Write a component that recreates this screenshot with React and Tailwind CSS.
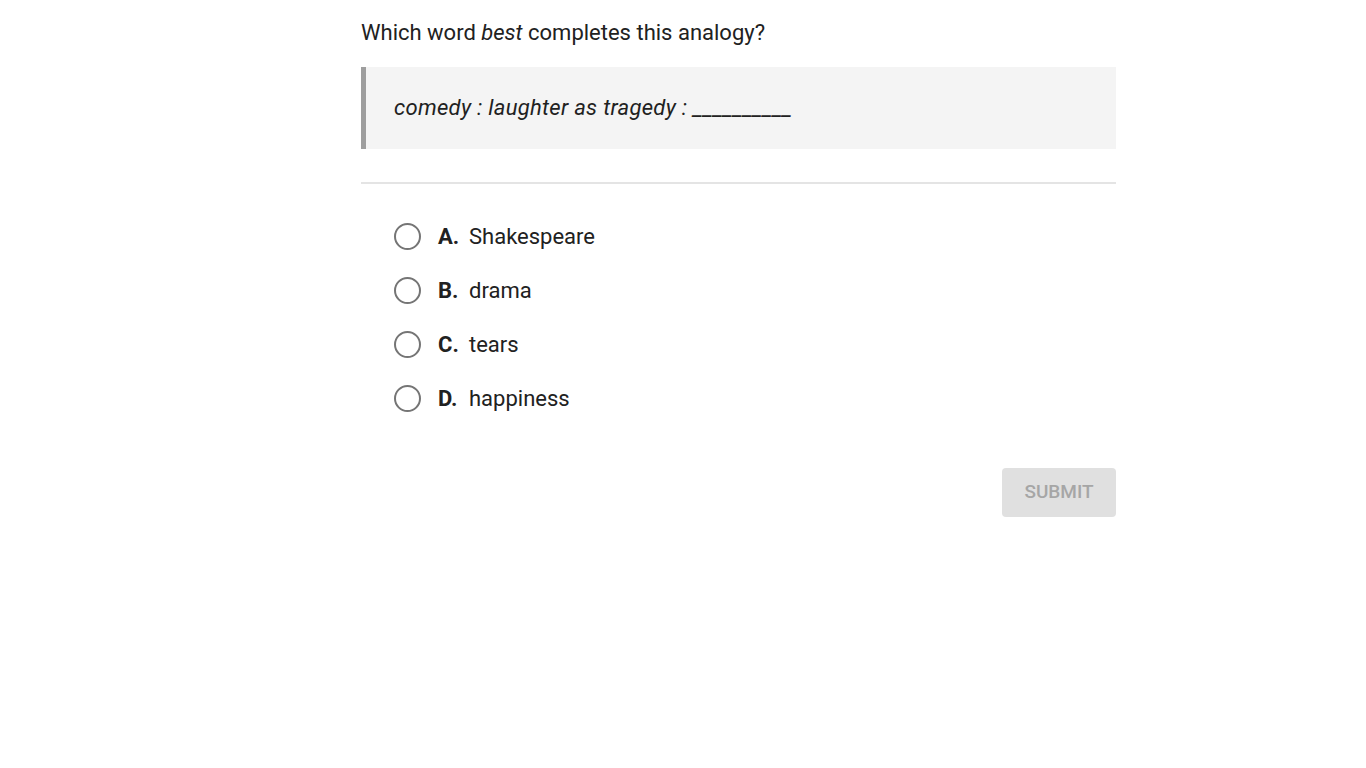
export default function App() {
  const options = [
    { letter: 'A.', text: 'Shakespeare' },
    { letter: 'B.', text: 'drama' },
    { letter: 'C.', text: 'tears' },
    { letter: 'D.', text: 'happiness' },
  ]

  return (
    <div className="min-h-screen bg-white font-['Roboto',sans-serif] text-[#212121]">
      <div className="ml-[361px] w-[755px] pt-[18px]">
        {/* question */}
        <p className="text-[22px] leading-[30px]">
          Which word <em>best</em> completes this analogy?
        </p>

        {/* analogy */}
        <div className="mt-[19px] border-l-[5px] border-[#9e9e9e] bg-[#f4f4f4] py-[26px] pl-[28px]">
          <p className="text-[22px] italic leading-[30px] tracking-[0.3px]">
            comedy : laughter as tragedy : __________
          </p>
        </div>

        <hr className="mt-[33px] border-0 border-t-2 border-[#e4e4e4]" />

        {/* choices */}
        <div className="mt-[37px] flex flex-col gap-[24px] pl-[33px]">
          {options.map((o) => (
            <label key={o.letter} className="flex h-[30px] items-center">
              <span className="h-[27px] w-[27px] rounded-full border-[2.5px] border-[#757575]" />
              <span className="ml-[17px] w-[31px] text-[22px] font-bold">{o.letter}</span>
              <span className="text-[22px]">{o.text}</span>
            </label>
          ))}
        </div>

        <div className="mt-[55px] flex justify-end">
          <button className="h-[49px] w-[114px] rounded-[4px] bg-[#e0e0e0] text-[19px] font-medium uppercase text-[#a6a6a6]">
            Submit
          </button>
        </div>
      </div>
    </div>
  )
}
